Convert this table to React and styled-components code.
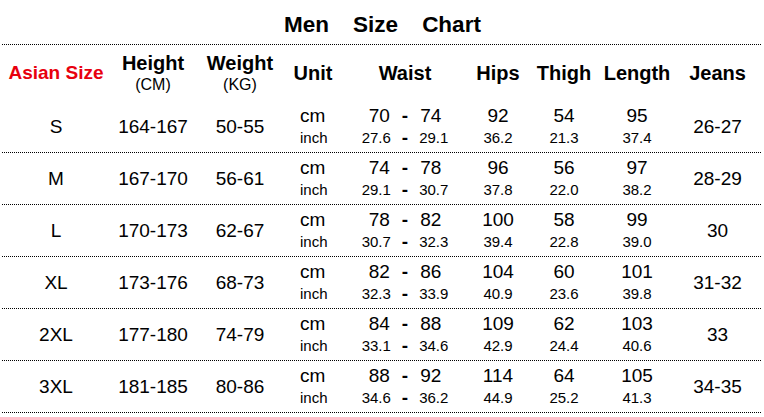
import React from 'react'
import styled, { createGlobalStyle } from 'styled-components'

const GlobalStyle = createGlobalStyle`
  html, body {
    margin: 0;
    padding: 0;
    background: #fff;
  }
  body {
    font-family: 'Liberation Sans', Arial, sans-serif;
    color: #000;
  }
`

const COLUMNS = '108px 86px 88px 58px 126px 60px 72px 74px 87px'

const Page = styled.div`
  width: 764px;
  height: 417px;
  padding: 0 3px 0 2px;
  box-sizing: border-box;
  overflow: hidden;
`

const TitleBar = styled.div`
  display: flex;
  justify-content: center;
  gap: 24px;
  height: 45px;
  box-sizing: border-box;
  padding: 12px 0 0 2px;
  border-bottom: 1px dotted #000;
  font-size: 22.5px;
  font-weight: bold;
  line-height: 25px;
`

const HeaderRow = styled.div`
  display: grid;
  grid-template-columns: ${COLUMNS};
  height: 56px;
  align-items: center;
  text-align: center;
`

const HeadLabel = styled.div`
  font-size: ${({ $size }) => $size || 20}px;
  font-weight: bold;
  line-height: 22px;
  color: ${({ $accent }) => ($accent ? '#e8000e' : '#000')};
`

const HeadSub = styled.div`
  font-size: 16px;
  line-height: 21px;
`

const Row = styled.div`
  display: grid;
  grid-template-columns: ${COLUMNS};
  height: 52px;
  box-sizing: border-box;
  border-bottom: 1px dotted #000;
  align-items: center;
  text-align: center;
  font-size: 19px;
`

const Stack = styled.div`
  align-self: start;
  padding-top: 3px;
  padding-left: ${({ $left }) => $left || 0}px;
  text-align: ${({ $align }) => $align || 'center'};
`

const CmLine = styled.div`
  font-size: 19px;
  line-height: 23px;
`

const InchLine = styled.div`
  font-size: 15px;
  line-height: 22px;
`

const RangeLine = styled.div`
  display: grid;
  grid-template-columns: 1fr auto 1fr;
  column-gap: ${({ $gap }) => $gap}px;
  font-size: ${({ $size }) => $size}px;
  line-height: ${({ $lh }) => $lh}px;

  & > span:first-child {
    text-align: right;
  }
  & > span:last-child {
    text-align: left;
  }
`

const Dash = styled.span`
  font-weight: bold;
  font-size: 19px;
`

const sizes = [
  { size: 'S', height: '164-167', weight: '50-55', waist: [70, 74], waistIn: ['27.6', '29.1'], hips: [92, '36.2'], thigh: [54, '21.3'], length: [95, '37.4'], jeans: '26-27' },
  { size: 'M', height: '167-170', weight: '56-61', waist: [74, 78], waistIn: ['29.1', '30.7'], hips: [96, '37.8'], thigh: [56, '22.0'], length: [97, '38.2'], jeans: '28-29' },
  { size: 'L', height: '170-173', weight: '62-67', waist: [78, 82], waistIn: ['30.7', '32.3'], hips: [100, '39.4'], thigh: [58, '22.8'], length: [99, '39.0'], jeans: '30' },
  { size: 'XL', height: '173-176', weight: '68-73', waist: [82, 86], waistIn: ['32.3', '33.9'], hips: [104, '40.9'], thigh: [60, '23.6'], length: [101, '39.8'], jeans: '31-32' },
  { size: '2XL', height: '177-180', weight: '74-79', waist: [84, 88], waistIn: ['33.1', '34.6'], hips: [109, '42.9'], thigh: [62, '24.4'], length: [103, '40.6'], jeans: '33' },
  { size: '3XL', height: '181-185', weight: '80-86', waist: [88, 92], waistIn: ['34.6', '36.2'], hips: [114, '44.9'], thigh: [64, '25.2'], length: [105, '41.3'], jeans: '34-35' }
]

const Measure = ({ values }) => (
  <Stack>
    <CmLine>{values[0]}</CmLine>
    <InchLine>{values[1]}</InchLine>
  </Stack>
)

export default function App() {
  return (
    <Page>
      <GlobalStyle />
      <TitleBar>
        <span>Men</span>
        <span>Size</span>
        <span>Chart</span>
      </TitleBar>

      <HeaderRow>
        <HeadLabel $accent $size={19}>Asian Size</HeadLabel>
        <div>
          <HeadLabel>Height</HeadLabel>
          <HeadSub>(CM)</HeadSub>
        </div>
        <div>
          <HeadLabel>Weight</HeadLabel>
          <HeadSub>(KG)</HeadSub>
        </div>
        <HeadLabel>Unit</HeadLabel>
        <HeadLabel>Waist</HeadLabel>
        <HeadLabel>Hips</HeadLabel>
        <HeadLabel>Thigh</HeadLabel>
        <HeadLabel>Length</HeadLabel>
        <HeadLabel>Jeans</HeadLabel>
      </HeaderRow>

      {sizes.map((r) => (
        <Row key={r.size}>
          <div>{r.size}</div>
          <div>{r.height}</div>
          <div>{r.weight}</div>
          <Stack $align="left" $left={16}>
            <CmLine>cm</CmLine>
            <InchLine>inch</InchLine>
          </Stack>
          <Stack>
            <RangeLine $gap={12} $size={19} $lh={23}>
              <span>{r.waist[0]}</span>
              <Dash>-</Dash>
              <span>{r.waist[1]}</span>
            </RangeLine>
            <RangeLine $gap={11} $size={15} $lh={22}>
              <span>{r.waistIn[0]}</span>
              <Dash>-</Dash>
              <span>{r.waistIn[1]}</span>
            </RangeLine>
          </Stack>
          <Measure values={r.hips} />
          <Measure values={r.thigh} />
          <Measure values={r.length} />
          <div>{r.jeans}</div>
        </Row>
      ))}
    </Page>
  )
}
